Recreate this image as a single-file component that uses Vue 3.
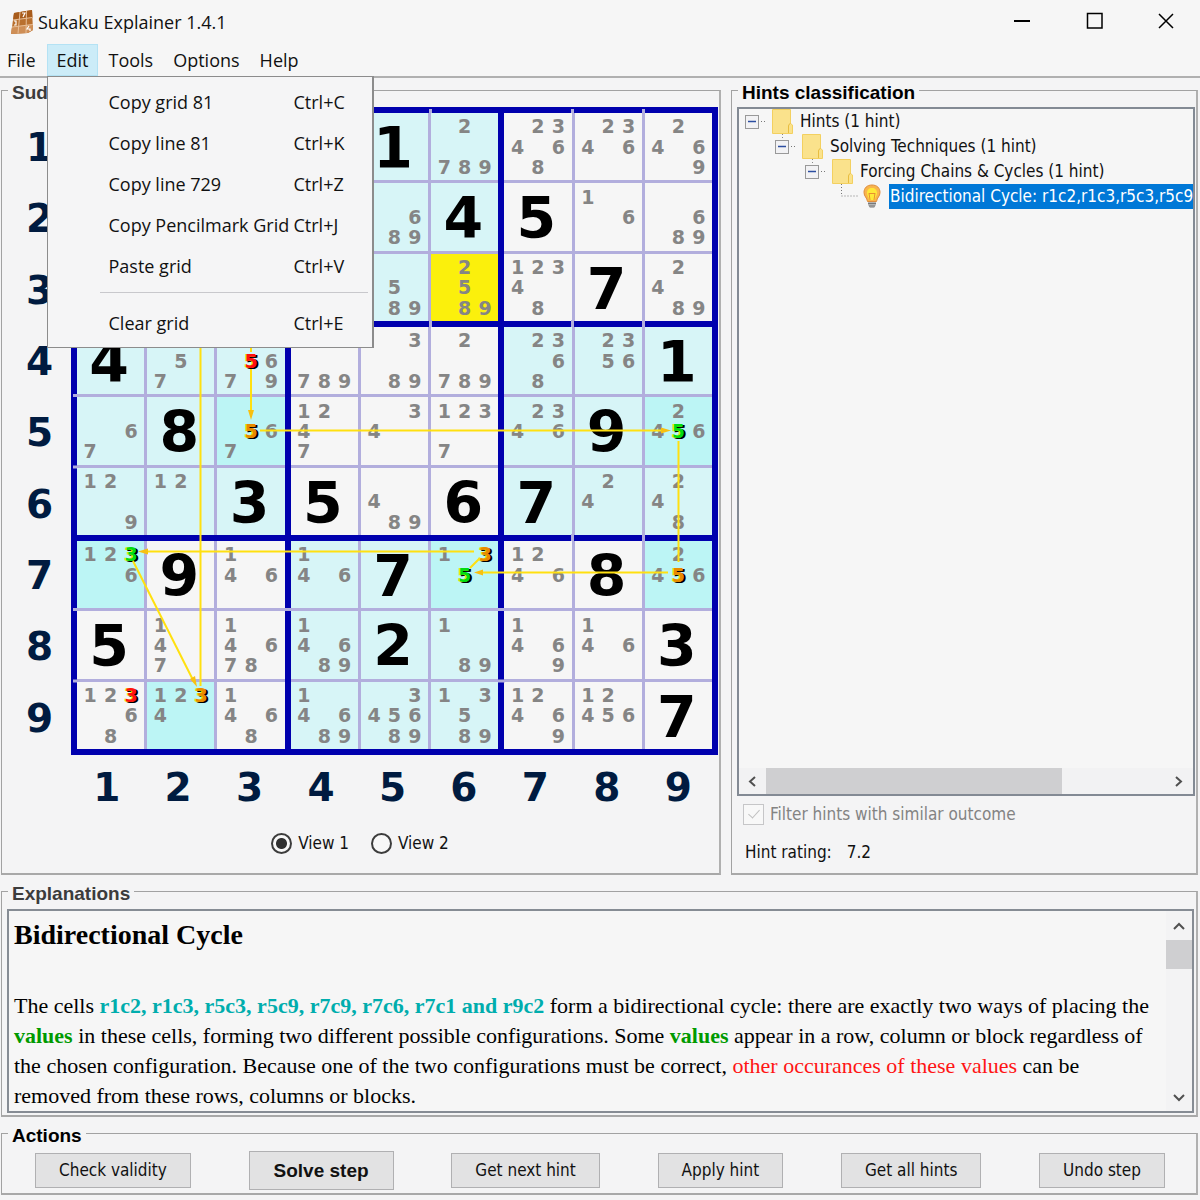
<script setup>
import { ref } from 'vue'

const menus = ['File', 'Edit', 'Tools', 'Options', 'Help']
const editItems = [
  { label: 'Copy grid 81', key: 'Ctrl+C' },
  { label: 'Copy line 81', key: 'Ctrl+K' },
  { label: 'Copy line 729', key: 'Ctrl+Z' },
  { label: 'Copy Pencilmark Grid', key: 'Ctrl+J' },
  { label: 'Paste grid', key: 'Ctrl+V' },
  { label: 'Clear grid', key: 'Ctrl+E', separated: true },
]

// "=n" is a solved cell, other strings list the remaining candidates
const grid = [
  ['', '', '', '', '=1', '2789', '23468', '2346', '2469'],
  ['', '', '', '', '689', '=4', '=5', '16', '689'],
  ['', '', '', '', '589', '2589', '12348', '=7', '2489'],
  ['=4', '57', '5679', '789', '389', '2789', '2368', '2356', '=1'],
  ['67', '=8', '567', '1247', '34', '1237', '2346', '=9', '2456'],
  ['129', '12', '=3', '=5', '489', '=6', '=7', '24', '248'],
  ['1236', '=9', '146', '146', '=7', '135', '1246', '=8', '2456'],
  ['=5', '147', '14678', '14689', '=2', '189', '1469', '146', '=3'],
  ['12368', '1234', '1468', '14689', '345689', '13589', '12469', '12456', '=7'],
]
// w: plain, l: linked region, s: part of the cycle, y: focused
const shades = [
  'llllllwww',
  'llllllwww',
  'lllllywww',
  'lllwwwlll',
  'llswwwlls',
  'lllwwwlll',
  'swwllswws',
  'wwwlllwww',
  'wswlllwww',
]
const marks = {
  '4-3-5': 'red', '5-3-5': 'orange', '5-9-5': 'green', '7-9-5': 'orange',
  '7-6-5': 'green', '7-6-3': 'orange', '7-1-3': 'green', '9-1-3': 'red', '9-2-3': 'orange',
}

const blocks = Array.from({ length: 9 }, (_, b) =>
  Array.from({ length: 9 }, (_, i) => {
    const r = Math.floor(b / 3) * 3 + Math.floor(i / 3)
    const c = (b % 3) * 3 + (i % 3)
    const value = grid[r][c]
    return {
      id: `${r + 1}-${c + 1}`,
      shade: shades[r][c],
      big: value[0] === '=' ? value[1] : '',
      candidates: value[0] === '=' ? [] : [...value].map(Number),
    }
  })
)

const tree = [
  { label: 'Hints (1 hint)', level: 0 },
  { label: 'Solving Techniques (1 hint)', level: 1 },
  { label: 'Forcing Chains & Cycles (1 hint)', level: 2 },
  { label: 'Bidirectional Cycle: r1c2,r1c3,r5c3,r5c9', level: 3, leaf: true },
]
const actions = ['Check validity', 'Solve step', 'Get next hint', 'Apply hint', 'Get all hints', 'Undo step']
const view = ref('View 1')
</script>

<template>
  <div class="window">
    <header class="titlebar">
      <svg class="logo" width="24" height="26" viewBox="0 0 24 26">
        <path d="M4 4 L22 1 L23 21 L18 24 L1 25 Z" fill="#b9702f" />
        <path d="M4 4 L22 1 L22.500 9 L3 11 Z" fill="#a85c1c" />
        <path d="M2 18 L23 15 L23 21 L18 24 L1 25 Z" fill="#cf8f57" />
        <path d="M3 11 L22.500 8.500 M2 18 L23 15.500 M10 3 L8 24.500 M16.500 2 L16 24" stroke="#e8bf98" stroke-width="1" fill="none" />
        <path d="M12 4 h3 l-2 4 M4 12 h2 v4 h-2 M19 17 l-2 3 h3 v2" stroke="#fff" stroke-width="1.200" fill="none" />
      </svg>
      <span class="title">Sukaku Explainer 1.4.1</span>
      <button class="winbtn" aria-label="Minimize"><svg width="18" height="18"><path d="M1 9H17" stroke="#000" stroke-width="2" /></svg></button>
      <button class="winbtn" aria-label="Maximize"><svg width="18" height="18"><rect x="1.500" y="1.500" width="14.500" height="14.500" fill="none" stroke="#000" stroke-width="1.500" /></svg></button>
      <button class="winbtn" aria-label="Close"><svg width="18" height="18"><path d="M2 2L16 16M16 2L2 16" stroke="#000" stroke-width="1.500" /></svg></button>
    </header>

    <nav class="menubar">
      <div v-for="m in menus" :key="m" class="menu">
        <button class="menu-title" :class="{ open: m === 'Edit' }">{{ m }}</button>
        <div v-if="m === 'Edit'" class="dropdown">
          <button v-for="i in editItems" :key="i.label" class="item" :class="{ separated: i.separated }">
            <span>{{ i.label }}</span><span>{{ i.key }}</span>
          </button>
        </div>
      </div>
    </nav>

    <main class="content">
      <div class="upper">
        <fieldset class="panel sudoku">
          <legend class="muted">Sudoku</legend>
          <div class="board-area">
            <div class="row-labels"><span v-for="n in 9" :key="n">{{ n }}</span></div>
            <div class="board">
              <div v-for="(block, b) in blocks" :key="b" class="block">
                <div v-for="cell in block" :key="cell.id" class="cell" :class="'shade-' + cell.shade">
                  <span v-if="cell.big" class="big">{{ cell.big }}</span>
                  <template v-else>
                    <span v-for="n in cell.candidates" :key="n" :class="['mark', 'pos-' + n, marks[cell.id + '-' + n]]">{{ n }}</span>
                  </template>
                </div>
              </div>
              <svg class="links" viewBox="0 0 647 648">
                <g stroke="#b2aedd" stroke-width="3">
                  <path d="M359.500 2v4M501.500 2v4M572.500 2v4M359.500 213v7M501.500 213v7M572.500 213v7M501.500 427v7M572.500 427v7" />
                  <path d="M2 75h4M2 146h4M2 288.500h4M2 360h4M2 502.500h4M2 574h4M213 502.500h7M427 502.500h7M427 574h7" />
                </g>
                <g stroke="#ffe010" stroke-width="2" fill="none">
                  <path d="M129.500 40V579M180 40V245M180 262V306M189 323.500H590M607.500 334V455M597 465.500H412M399 461L409 451M403 444.500H76M62 454L122 573" />
                </g>
                <g fill="#f8c010">
                  <path d="M180 313l-3-10h6zM600 323.500l-10-3v6zM403 465.500l9-3v6zM67 444.500l10-3v6zM126 580l-7-8 5-3z" />
                </g>
              </svg>
            </div>
          </div>
          <div class="col-labels"><span v-for="n in 9" :key="n">{{ n }}</span></div>
          <div class="views">
            <label v-for="v in ['View 1', 'View 2']" :key="v"><input v-model="view" type="radio" name="view" :value="v" />{{ v }}</label>
          </div>
        </fieldset>

        <fieldset class="panel hints">
          <legend>Hints classification</legend>
          <div class="tree-box">
            <ul class="tree">
              <li v-for="t in tree" :key="t.label" :class="['level-' + t.level, { leaf: t.leaf }]">
                <svg v-if="!t.leaf" width="50" height="25" viewBox="0 0 50 25">
                  <path v-if="t.level" d="M7.500 0v6" stroke="#888" stroke-dasharray="1 2" />
                  <rect x="0.500" y="6.500" width="13" height="13" fill="#f2f2f4" stroke="#999" />
                  <path d="M3 12.500h8" stroke="#2c4ea0" stroke-width="1.500" />
                  <path d="M16 12.500h6" stroke="#777" stroke-dasharray="1 2" />
                  <path d="M27.500 0.500h18v14l2 1.500v8.500h-20z" fill="#fae28c" stroke="#f3d060" />
                  <path d="M43.500 24v-7q0-2 2-2.500" fill="none" stroke="#e8bd40" />
                </svg>
                <svg v-else width="50" height="25" viewBox="0 0 50 25">
                  <path d="M6.500 0v12h17" fill="none" stroke="#777" stroke-dasharray="1 2" />
                  <path d="M37 1c5 0 8 3 8 7.500 0 4-3 5-3.500 9h-9c-.5-4-3.500-5-3.500-9C29 4 32 1 37 1z" fill="#f8b54c" stroke="#e08c3c" />
                  <path d="M37 4c3 0 5 2 5 5s-2 4-2 7h-6c0-3-2-4-2-7s2-5 5-5z" fill="#ffe838" />
                  <path d="M34 9l1 7M40 9l-1 7M34 9.500h6" stroke="#e89030" fill="none" />
                  <path d="M33 18h8v3l-2 3h-4l-2-3z" fill="#b5b5b5" />
                  <path d="M33 19.500h8M34 22h6" stroke="#777" />
                </svg>
                <span>{{ t.label }}</span>
              </li>
            </ul>
            <div class="hscroll">
              <svg width="27" height="26"><path d="M16 9l-5 4.500 5 4.500" fill="none" stroke="#505050" stroke-width="2" /></svg>
              <div class="htrack"><div class="hthumb"></div></div>
              <svg width="27" height="26"><path d="M10 9l5 4.500-5 4.500" fill="none" stroke="#505050" stroke-width="2" /></svg>
            </div>
          </div>
          <label class="filter"><input type="checkbox" disabled checked />Filter hints with similar outcome</label>
          <p class="rating"><span>Hint rating:</span><span>7.2</span></p>
        </fieldset>
      </div>

      <fieldset class="panel explanations">
        <legend class="muted">Explanations</legend>
        <div class="explain-box">
          <article>
            <h1>Bidirectional Cycle</h1>
            <p>
              The cells <b class="cells">r1c2, r1c3, r5c3, r5c9, r7c9, r7c6, r7c1 and r9c2</b> form a bidirectional cycle: there are exactly two ways of placing the <b class="values">values</b> in these cells, forming two different possible configurations. Some <b class="values">values</b> appear in a row, column or block regardless of the chosen configuration. Because one of the two configurations must be correct, <span class="others">other occurances of these values</span> can be removed from these rows, columns or blocks.
            </p>
          </article>
          <div class="vscroll">
            <svg width="26" height="29"><path d="M8 18l5-5 5 5" fill="none" stroke="#505050" stroke-width="2" /></svg>
            <div class="vthumb"></div>
            <svg class="down" width="26" height="29"><path d="M8 13l5 5 5-5" fill="none" stroke="#505050" stroke-width="2" /></svg>
          </div>
        </div>
      </fieldset>

      <fieldset class="panel actions">
        <legend>Actions</legend>
        <div class="buttons">
          <button v-for="a in actions" :key="a" :class="{ primary: a === 'Solve step' }">{{ a }}</button>
        </div>
      </fieldset>
    </main>
  </div>
</template>

<style>
body {
  margin: 0;
  background: #f4f4f5;
}
</style>

<style scoped>
* {
  box-sizing: border-box;
}
.window {
  font-family: "DejaVu Sans Condensed", "Noto Sans", sans-serif;
  font-size: 17px;
  color: #111;
}
button {
  font: inherit;
  color: inherit;
  border: 0;
  background: none;
  padding: 0;
}
.titlebar {
  display: flex;
  align-items: center;
  height: 44px;
  padding-left: 10px;
  background: #f6f6f6;
}
.logo {
  margin-right: 4px;
}
.title {
  flex: 1;
  font-size: 18px;
  font-family: "Open Sans", "Noto Sans", sans-serif;
}
.winbtn {
  display: grid;
  place-items: center;
  width: 73px;
  height: 44px;
  padding-bottom: 2px;
}
.winbtn:last-child {
  width: 69px;
}
.menubar {
  display: flex;
  height: 34px;
  background: #f6f6f6;
  border-bottom: 2px solid #b0b0b0;
  font-family: "Open Sans", "Noto Sans", sans-serif;
  font-size: 18px;
}
.menu {
  position: relative;
}
.menu-title {
  height: 32px;
  padding: 0 10px;
}
.menu:first-child .menu-title {
  padding: 0 11px 0 7px;
}
.menu-title.open {
  background: #ccecf8;
  box-shadow: inset 0 0 0 1px #b4e2f4;
}
.dropdown {
  position: absolute;
  z-index: 5;
  top: 32px;
  left: 0;
  width: 327px;
  padding: 4px 4px 4px 0;
  background: #f5f5f6;
  border: 1px solid #8c8c8c;
  border-right-width: 2px;
}
.item {
  display: grid;
  grid-template-columns: 185px auto;
  justify-content: start;
  align-items: center;
  width: 100%;
  height: 41px;
  padding-left: 61px;
  text-align: left;
  white-space: nowrap;
}
.item.separated {
  position: relative;
  margin-top: 16px;
}
.item.separated::before {
  content: "";
  position: absolute;
  top: -10px;
  left: 52px;
  right: 0;
  border-top: 1px solid #c8c8cc;
}
.content {
  display: grid;
  gap: 4px;
  padding: 0 2px 0 1px;
}
.upper {
  display: grid;
  grid-template-columns: 720fr 467fr;
  gap: 10px;
}
.panel {
  min-width: 0;
  margin: 0;
  padding: 4px 1px 4px 5px;
  border: 1px solid #a2a2a2;
  border-right: 2px solid #b0b0b0;
  border-bottom: 2px solid #a8a8a8;
}
legend {
  margin-left: 1px;
  padding: 5px 4px 0;
  font: bold 19px/20px "Liberation Sans", Arial, sans-serif;
  color: #000;
}
legend.muted {
  color: #3c3c3c;
}
.panel.sudoku {
  padding-left: 0;
  padding-bottom: 6px;
}
.sudoku legend {
  margin-left: 6px;
}
.board-area {
  display: grid;
  grid-template-columns: 69px 1fr;
}
.row-labels,
.col-labels {
  display: grid;
  font: bold 39px/1 "DejaVu Sans", Verdana, sans-serif;
  color: #001b40;
}
.row-labels {
  grid-template-rows: repeat(9, 1fr);
  place-items: center;
  padding: 5px 0 1px 6px;
}
.col-labels {
  grid-template-columns: repeat(9, 1fr);
  place-items: center;
  height: 64px;
  padding-right: 4px;
  margin-left: 69px;
}
.board {
  position: relative;
  display: grid;
  grid-template: repeat(3, 1fr) / repeat(3, 1fr);
  gap: 6px;
  aspect-ratio: 647 / 648;
  padding: 6px;
  background: #0000ae;
}
.block {
  display: grid;
  grid-template: repeat(3, minmax(0, 1fr)) / repeat(3, minmax(0, 1fr));
  gap: 3px;
  background: #b2aedd;
}
.cell {
  display: grid;
  grid-template: repeat(3, minmax(0, 1fr)) / repeat(3, minmax(0, 1fr));
  place-items: center;
  padding: 3px;
  background: #f6f6f6;
  font-family: "DejaVu Sans", Verdana, sans-serif;
  font-weight: bold;
}
.shade-l { background: #d7f5f7; }
.shade-s { background: #bcf5f5; }
.shade-y { background: #fbf00c; }
.big {
  grid-area: 1 / 1 / 4 / 4;
  padding: 3px 3px 0 0;
  font-size: 57px;
  line-height: 58px;
  color: #000;
}
.mark {
  font-size: 19px;
  line-height: 20px;
  color: #858585;
}
.pos-1 { grid-area: 1 / 1; }
.pos-2 { grid-area: 1 / 2; }
.pos-3 { grid-area: 1 / 3; }
.pos-4 { grid-area: 2 / 1; }
.pos-5 { grid-area: 2 / 2; }
.pos-6 { grid-area: 2 / 3; }
.pos-7 { grid-area: 3 / 1; }
.pos-8 { grid-area: 3 / 2; }
.pos-9 { grid-area: 3 / 3; }
.red, .orange, .green {
  text-shadow: -1px 0 #ffee00, 1px 1px #000, 2px 1px #000;
}
.red { color: #ff1010; }
.orange { color: #e88a00; }
.green { color: #00dd10; }
.links {
  position: absolute;
  inset: 0;
  width: 100%;
  height: 100%;
}
.views {
  display: flex;
  justify-content: center;
  gap: 22px;
  height: 48px;
}
.views label,
.filter {
  display: flex;
  align-items: center;
}
input {
  appearance: none;
  margin: 0;
  width: 21px;
  height: 21px;
  border: 2px solid #3c3c3c;
  background: #f8f8f8;
}
.views input {
  margin-right: 6px;
  border-radius: 50%;
}
.views input:checked {
  background: radial-gradient(circle, #303030 5px, #f8f8f8 6px);
}
.hints {
  display: flex;
  flex-direction: column;
}
.tree-box {
  display: flex;
  flex-direction: column;
  flex: 1;
  min-width: 0;
  border: 2px solid #838a94;
  background: #f6f6f6;
}
.tree {
  flex: 1;
  margin: 0;
  padding: 0 0 0 6px;
  list-style: none;
  overflow: hidden;
}
.tree li {
  display: flex;
  height: 25px;
  line-height: 25px;
  white-space: nowrap;
}
.tree svg {
  flex: none;
}
.tree span {
  padding-left: 5px;
}
.level-1 { padding-left: 30px; }
.level-2 { padding-left: 60px; }
.level-3 { padding-left: 90px; }
.tree .leaf span {
  flex: 1 0 auto;
  padding-left: 1px;
  margin-left: 4px;
  background: #0078d7;
  color: #fff;
}
.hscroll {
  display: flex;
  height: 26px;
  background: #f2f2f3;
}
.htrack {
  flex: 1;
}
.hthumb {
  width: 74%;
  height: 100%;
  background: #cfcfd1;
}
.filter {
  height: 36px;
  padding-left: 6px;
  color: #838383;
}
.filter input {
  position: relative;
  margin-right: 6px;
  border: 1px solid #c6c6c8;
}
.filter input::after {
  content: "";
  position: absolute;
  left: 7px;
  top: 2px;
  width: 5px;
  height: 10px;
  border: solid #c0c0c0;
  border-width: 0 1px 1px 0;
  transform: rotate(42deg);
}
.rating {
  display: flex;
  gap: 15px;
  margin: 0;
  padding: 5px 0 2px 8px;
  line-height: 30px;
}
.panel.explanations {
  padding: 5px 2px 2px 5px;
}
.explain-box {
  display: flex;
  height: 204px;
  border: 2px solid #868c94;
  background: #f6f6f6;
  font-family: "Liberation Serif", "Times New Roman", serif;
  color: #000;
}
article {
  flex: 1;
  padding: 0 12px 0 5px;
}
h1 {
  margin: 9px 0 41px;
  font-size: 28px;
  line-height: 30px;
}
article p {
  margin: 0;
  font-size: 22px;
  line-height: 30px;
}
.cells { color: #00adad; }
.values { color: #009a00; }
.others { color: #ff1414; }
.vscroll {
  display: flex;
  flex-direction: column;
  width: 26px;
  background: #f3f3f4;
}
.vthumb {
  height: 29px;
  background: #cfcfd1;
}
.down {
  margin-top: auto;
}
.panel.actions {
  padding-bottom: 2px;
}
.buttons {
  display: flex;
  justify-content: space-between;
  align-items: center;
  height: 41px;
  padding: 0 30px 0 28px;
}
.buttons button {
  height: 35px;
  padding: 0 23px 2px;
  border: 1px solid #b0b0b2;
  background: #e2e2e3;
}
.buttons .primary {
  height: 39px;
  padding: 0 24px;
  font: bold 19px "Liberation Sans", Arial, sans-serif;
}
</style>
